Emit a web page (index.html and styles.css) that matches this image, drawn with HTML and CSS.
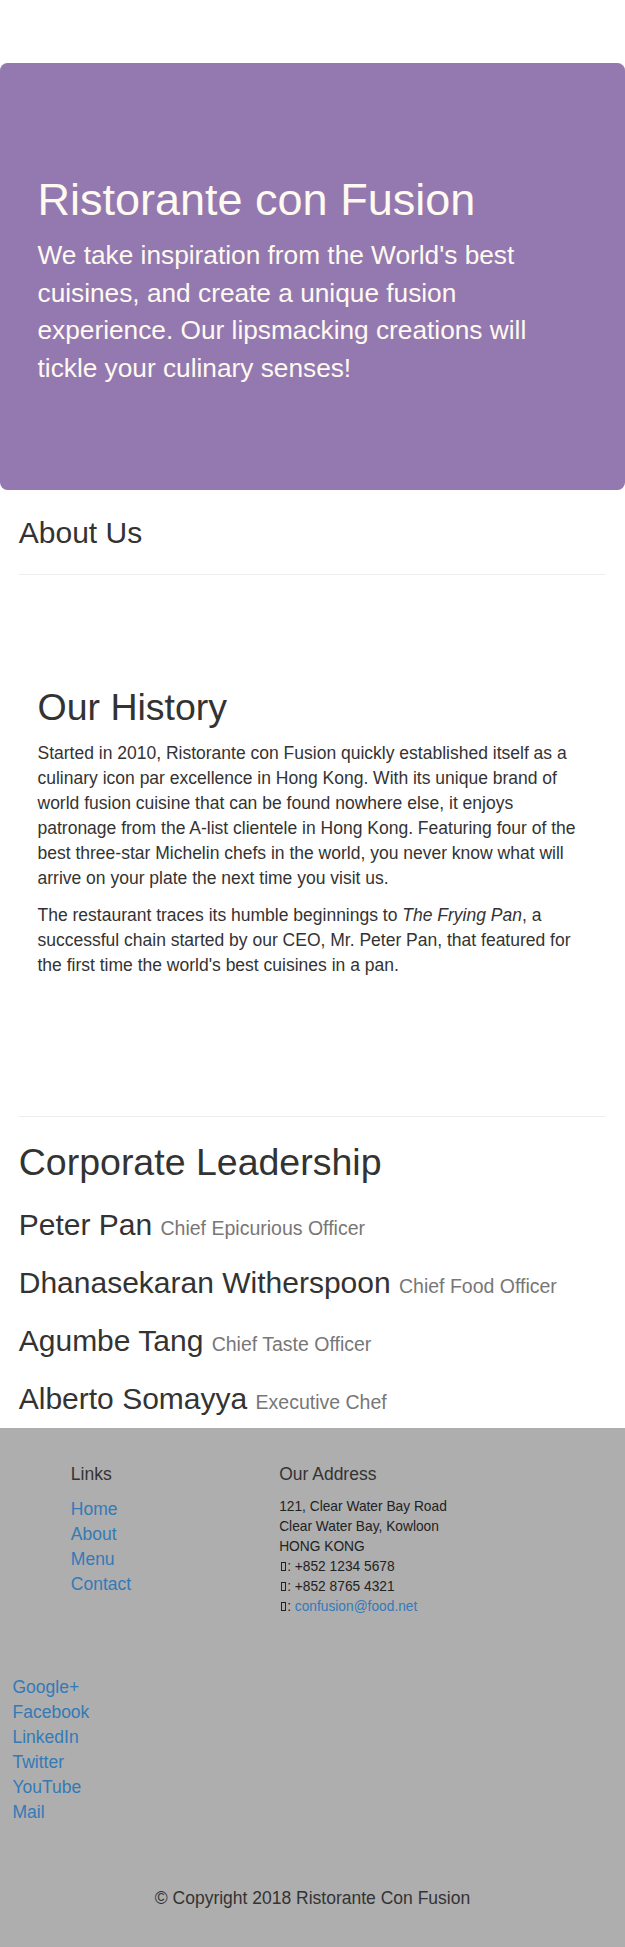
FILE: index.html
```html
<!DOCTYPE html>
<html lang="en">
<head>
<meta charset="utf-8">
<title>About Us - Ristorante con Fusion</title>
<link rel="stylesheet" href="styles.css">
</head>
<body>
<header class="jumbotron">
  <h1>Ristorante con Fusion</h1>
  <p>We take inspiration from the World's best cuisines, and create a unique fusion experience. Our lipsmacking creations will tickle your culinary senses!</p>
</header>

<main class="container">
  <section class="about-head">
    <h3>About Us</h3>
    <hr class="rule">
  </section>

  <section class="history">
    <h2>Our History</h2>
    <p>Started in 2010, Ristorante con Fusion quickly established itself as a culinary icon par excellence in Hong Kong. With its unique brand of world fusion cuisine that can be found nowhere else, it enjoys patronage from the A-list clientele in Hong Kong. Featuring four of the best three-star Michelin chefs in the world, you never know what will arrive on your plate the next time you visit us.</p>
    <p>The restaurant traces its humble beginnings to <em>The Frying Pan</em>, a successful chain started by our CEO, Mr. Peter Pan, that featured for the first time the world's best cuisines in a pan.</p>
  </section>

  <hr class="rule flat">

  <section class="leadership">
    <h2>Corporate Leadership</h2>
    <h3>Peter Pan <small>Chief Epicurious Officer</small></h3>
    <h3>Dhanasekaran Witherspoon <small>Chief Food Officer</small></h3>
    <h3>Agumbe Tang <small>Chief Taste Officer</small></h3>
    <h3>Alberto Somayya <small>Executive Chef</small></h3>
  </section>
</main>

<footer class="footer">
  <div class="footer-cols">
    <div class="links-col">
      <h5>Links</h5>
      <ul class="plain">
        <li><a href="#">Home</a></li>
        <li><a href="#">About</a></li>
        <li><a href="#">Menu</a></li>
        <li><a href="#">Contact</a></li>
      </ul>
    </div>
    <div class="address-col">
      <h5>Our Address</h5>
      <address>
        121, Clear Water Bay Road<br>
        Clear Water Bay, Kowloon<br>
        HONG KONG<br>
        <span class="tofu"></span>: +852 1234 5678<br>
        <span class="tofu"></span>: +852 8765 4321<br>
        <span class="tofu"></span>: <a href="#">confusion@food.net</a>
      </address>
    </div>
  </div>
  <div class="social">
    <a href="#">Google+</a>
    <a href="#">Facebook</a>
    <a href="#">LinkedIn</a>
    <a href="#">Twitter</a>
    <a href="#">YouTube</a>
    <a href="#">Mail</a>
  </div>
  <p class="copyright">© Copyright 2018 Ristorante Con Fusion</p>
</footer>
</body>
</html>
```

FILE: styles.css
```css
html, body {
  margin: 0;
  padding: 0;
}

body {
  padding-top: 62.5px;
  font-family: "Liberation Sans", Arial, Helvetica, sans-serif;
  font-size: 17.5px;
  line-height: 25px;
  color: #333;
  background: #fff;
}

a {
  color: #337ab7;
  text-decoration: none;
}

h1, h2, h3, h5 {
  font-weight: 500;
  color: inherit;
}

/* ---------- Jumbotron ---------- */
.jumbotron {
  background: #9479b0;
  color: #fffaf0;
  border-radius: 7.5px;
  padding: 87.5px 37.5px 102.5px;
}

.jumbotron h1 {
  font-size: 45px;
  line-height: 49.5px;
  margin: 25px 0 12.5px;
}

.jumbotron p {
  font-size: 26.25px;
  line-height: 37.5px;
  margin: 0;
}

/* ---------- Main ---------- */
.container {
  padding: 0 18.75px;
}

.about-head h3 {
  font-size: 30px;
  line-height: 33px;
  margin: 26px 0 0;
}

.rule {
  border: 0;
  border-top: 1px solid #eee;
  height: 0;
  margin: 25px 0 0;
}

.rule.flat {
  margin: 0;
}

.history {
  padding: 87.5px 18.75px 125px;
}

.history h2,
.leadership h2 {
  font-size: 37.5px;
  line-height: 41.25px;
  margin: 25px 0 12.5px;
}

.history p {
  margin: 0 0 12.5px;
}

.leadership h3 {
  font-size: 30px;
  line-height: 33px;
  margin: 25px 0 12.5px;
}

.leadership small {
  font-size: 19.5px;
  line-height: 1;
  color: #777;
  font-weight: 400;
}

/* ---------- Footer ---------- */
.footer {
  background: #aeaeae;
  padding: 25px 0 36px;
}

.footer-cols {
  display: flex;
  align-items: flex-start;
}

.links-col {
  width: 208.33px;
  margin-left: 52.08px;
  padding: 0 18.75px;
  box-sizing: border-box;
}

.address-col {
  width: 364.58px;
  padding: 0 18.75px;
  box-sizing: border-box;
}

.footer h5 {
  font-size: 17.5px;
  line-height: 19.25px;
  margin: 12.5px 0;
}

.plain {
  list-style: none;
  margin: 0 0 12.5px;
  padding: 0;
}

address {
  font-style: normal;
  font-size: 13.75px;
  line-height: 20px;
  color: #222;
  margin: 0;
}

.tofu {
  display: inline-block;
  width: 5px;
  height: 9px;
  border: 1px solid #222;
  box-sizing: border-box;
  margin: 0 1.5px 0 1.5px;
  vertical-align: baseline;
}

.social {
  display: flex;
  flex-direction: column;
  align-items: flex-start;
  margin-top: 58px;
  padding-left: 12.5px;
}

.copyright {
  text-align: center;
  margin: 61px 0 0;
}
```
